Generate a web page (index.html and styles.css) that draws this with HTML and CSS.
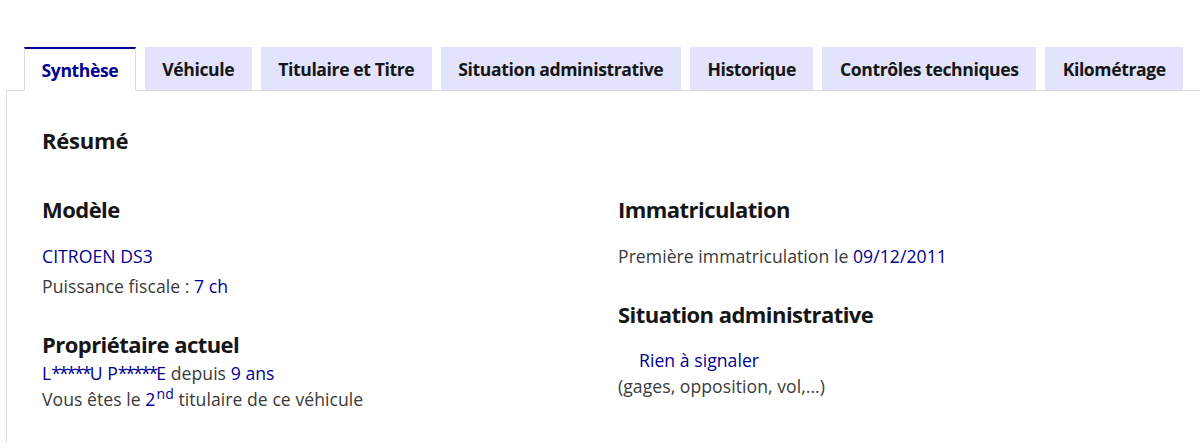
FILE: index.html
```html
<!DOCTYPE html>
<html lang="fr">
<head>
    <meta charset="UTF-8">
    <meta name="viewport" content="width=device-width, initial-scale=1.0">
    <title>Historique du véhicule - Synthèse</title>
    <link rel="stylesheet" href="styles.css">
</head>
<body>

<div class="tabs">
    <ul class="tab-list">
        <li class="tab tab-selected">Synthèse</li>
        <li class="tab">Véhicule</li>
        <li class="tab">Titulaire et Titre</li>
        <li class="tab">Situation administrative</li>
        <li class="tab">Historique</li>
        <li class="tab">Contrôles techniques</li>
        <li class="tab">Kilométrage</li>
    </ul>

    <div class="tab-panel">
        <h2 class="panel-title">Résumé</h2>

        <div class="summary">
            <div class="summary-col">
                <h3 class="block-title">Modèle</h3>
                <p class="line first"><span class="value">CITROEN DS3</span></p>
                <p class="line gap-small">Puissance fiscale : <span class="value">7 ch</span></p>

                <h3 class="block-title owner">Propriétaire actuel</h3>
                <p class="line tight">
                    <span class="value">L<span class="mask">*****</span>U P<span class="mask">*****</span>E</span> depuis <span class="value">9 ans</span><br>
                    Vous êtes le <span class="value">2<sup>nd</sup></span> titulaire de ce véhicule
                </p>
            </div>

            <div class="summary-col">
                <h3 class="block-title">Immatriculation</h3>
                <p class="line first">Première immatriculation le <span class="value">09/12/2011</span></p>

                <h3 class="block-title situation">Situation administrative</h3>
                <p class="line status">
                    <span class="value status-ok">Rien à signaler</span><br>
                    (gages, opposition, vol,...)
                </p>
            </div>
        </div>
    </div>
</div>

</body>
</html>
```

FILE: styles.css
```css
/* Page base */
body {
    margin: 0;
    font-family: "Open Sans", "Liberation Sans", sans-serif;
    color: #3a3a3a;
    background-color: #fff;
    overflow: hidden;
}

.tabs {
    padding: 47px 0 0 6px;
}

/* Tab buttons */
.tab-list {
    display: flex;
    align-items: flex-end;
    gap: 9px;
    list-style: none;
    margin: 0;
    padding: 0 0 0 18px;
}

.tab {
    display: flex;
    align-items: center;
    height: 43px;
    padding: 0 17.5px;
    background-color: #e3e3fd;
    color: #161616;
    font-size: 17.6px;
    font-weight: 700;
    letter-spacing: -0.4px;
    white-space: nowrap;
    cursor: pointer;
}

.tab-selected {
    position: relative;
    z-index: 1;
    box-sizing: border-box;
    height: 44px;
    margin-bottom: -1px;
    padding: 0 16.5px;
    background-color: #fff;
    color: #000091;
    border-top: 2px solid #000091;
    border-left: 1px solid #ddd;
    border-right: 1px solid #ddd;
}

/* Panel */
.tab-panel {
    box-sizing: border-box;
    width: 1224px;
    padding: 34px 35px 30px;
    border-top: 1px solid #ddd;
    border-left: 1px solid #ddd;
}

.panel-title {
    margin: 0 0 39px;
    font-size: 22px;
    line-height: 30px;
    font-weight: 700;
    color: #161616;
    letter-spacing: -0.2px;
}

.summary {
    display: grid;
    grid-template-columns: 576px 576px;
}

.block-title {
    margin: 0;
    font-size: 22px;
    line-height: 30px;
    font-weight: 700;
    color: #161616;
    letter-spacing: -0.55px;
}

.block-title.owner {
    margin-top: 29px;
}

.block-title.situation {
    margin-top: 30px;
}

.line {
    margin: 0;
    font-size: 17.6px;
    line-height: 26.4px;
    letter-spacing: 0.05px;
}

.line.first {
    margin-top: 19px;
}

.line.gap-small {
    margin-top: 4px;
}

.line.tight {
    margin-top: 1px;
}

.line.status {
    margin-top: 17.5px;
}

.value {
    color: #000091;
}

/* masked owner name: narrow stars */
.mask {
    letter-spacing: -2px;
}

.status-ok {
    padding-left: 21px;
}

sup {
    font-size: 0.8em;
    line-height: 0;
    margin-left: 1px;
}
```
